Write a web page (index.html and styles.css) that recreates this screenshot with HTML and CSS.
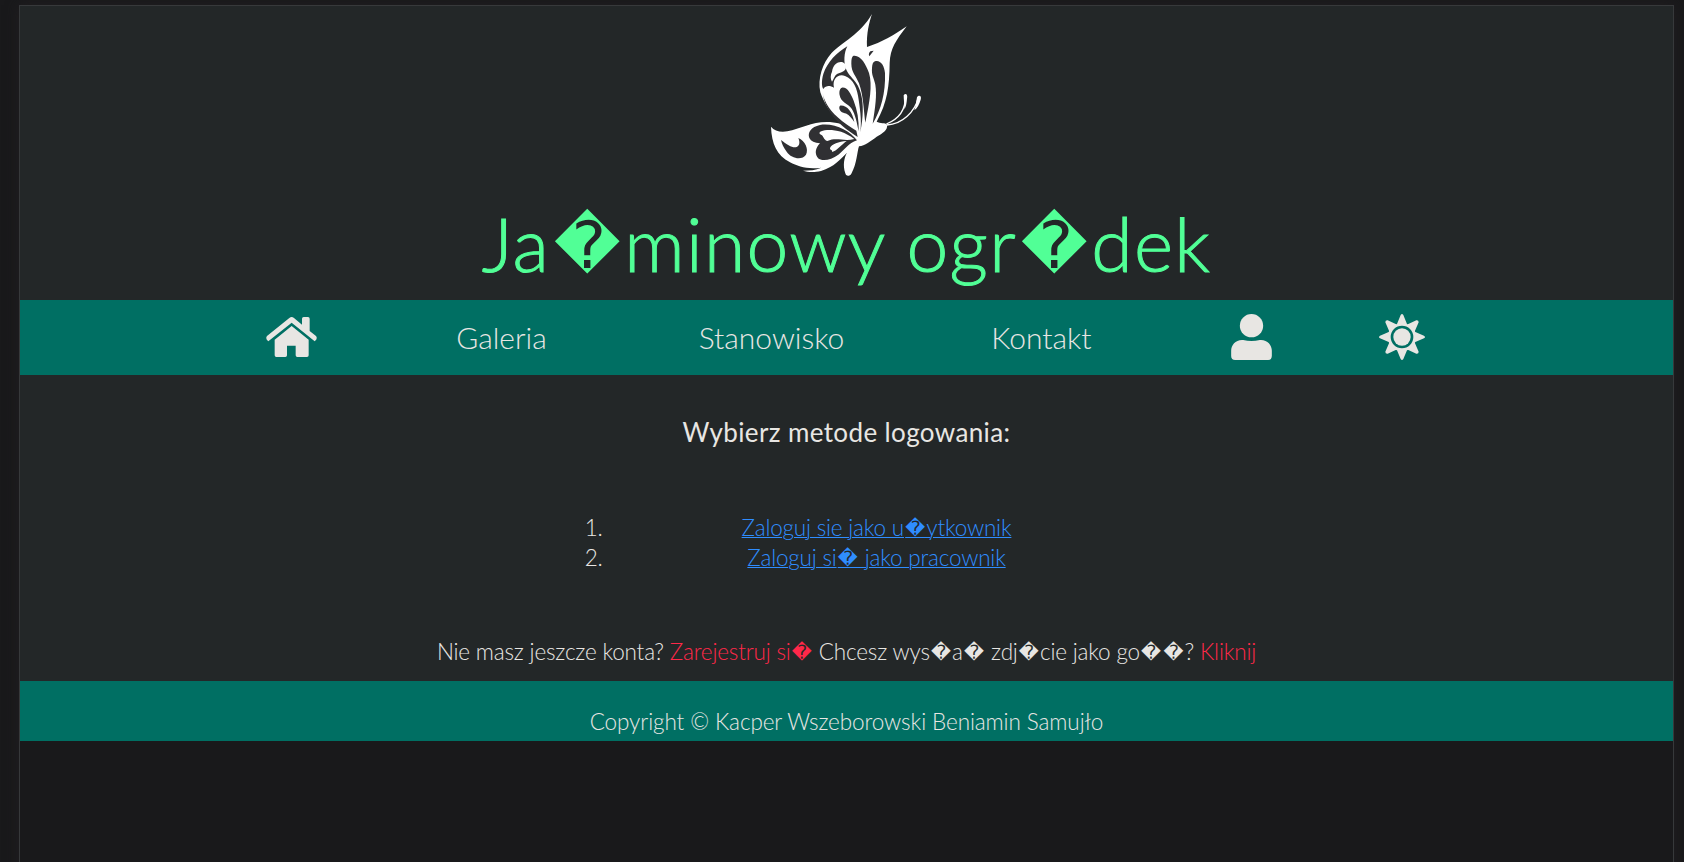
FILE: index.html
```html
<!DOCTYPE html>
<html lang="pl">
<head>
<meta charset="utf-8">
<title>Logowanie</title>
<link rel="stylesheet" href="styles.css">
</head>
<body>
<div class="container">
  <header class="header">
    <svg class="logo" viewBox="0 0 510 525" aria-hidden="true">
      <path class="wing" d="M336 27C328 50 319 85 321 126C365 113 405 88 440 64C407 108 391 130 389 174C388 245 382 292 350 350C360 356 376 352 381 359C384 376 368 384 350 395C332 409 315 421 297 424C291 440 291 477 274 506C269 515 257 514 256 505C248 481 252 459 261 443C241 463 223 485 183 498C160 503 143 501 129 497C150 497 166 495 184 488C142 493 114 485 90 472C50 450 35 417 33 365C43 378 62 383 82 379C132 368 172 339 242 356C210 326 191 291 181 262C172 221 188 174 214 145C246 112 302 87 336 27Z"/>
      <path class="vein" d="M262 124C231 142 202 171 190 207C184 228 185 245 190 252C198 240 211 242 222 248C216 223 234 205 255 213C281 222 292 252 296 284C301 318 307 361 298 394C308 353 311 312 306 281C299 229 270 220 259 194C250 175 252 142 262 124Z"/>
      <path class="wing" d="M216 200C222 164 257 165 258 186C258 202 239 202 231 207C223 212 222 222 216 230C211 222 211 210 216 200Z"/>
      <path class="vein" d="M279 153C300 148 317 176 327 204C338 241 329 291 316 353C311 320 311 274 297 235C288 211 274 203 274 176C274 163 275 157 279 153ZM345 169C360 164 373 180 375 204C377 265 363 315 338 356C346 305 351 270 346 239C342 217 334 212 336 188C337 177 339 171 345 169ZM331 139L341 137L328 154Q324 146 331 139Z"/>
      <path class="vein" d="M246 248C262 246 272 266 281 287C292 315 297 345 296 379C291 354 286 328 275 311C263 295 243 293 239 271C237 260 239 250 246 248ZM240 302C261 300 276 319 283 351C268 329 262 326 250 323C239 319 235 308 240 302Z"/>
      <path class="vein" d="M188 262C192 308 225 354 293 396L289 377C247 353 214 323 200 297C193 284 189 274 188 262Z"/>
      <path class="vein" d="M291 406C270 378 223 353 180 360C153 366 142 383 148 399C153 409 164 414 180 415C166 428 162 449 176 461C191 469 214 464 235 449C254 434 265 415 291 406Z"/>
      <path class="wing" d="M283 402C253 379 226 374 201 375C182 377 172 383 183 389C192 393 189 403 202 408C229 396 252 410 283 402ZM260 408C236 410 215 417 210 429C209 436 219 434 216 441C233 436 243 420 260 408Z"/>
      <path class="vein" d="M63 405C83 421 99 430 110 426C121 421 119 409 115 399C135 408 147 432 138 449C126 467 94 461 80 440C70 427 66 417 63 405Z"/>
      <path class="feeler" d="M379 357C413 343 437 316 436 275M381 360C427 358 465 320 475 278"/>
      <path class="wing" d="M431 271C437 263 444 269 441 281C440 294 438 305 433 313C434 298 431 286 431 271ZM471 277C477 268 486 273 482 284C478 298 472 309 463 316C468 303 468 291 471 277Z"/>
    </svg>
    <h1 class="title">Ja<span class="unknown">&#xFFFD;</span>minowy ogr<span class="unknown">&#xFFFD;</span>dek</h1>
  </header>
  <nav class="nav">
    <a class="item narrow"><svg class="home" viewBox="0 0 153 120"><path d="M7 73 Q-3 65 3 57L70 3Q77-3 84 3L108 23V5Q108 0 113 0H126Q131 0 131 5V42L150 57Q156 65 146 73L77 17Z"/><path d="M26 68L77 27L128 68V115Q128 120 123 120H94Q89 120 89 115V86H63V115Q63 120 58 120H31Q26 120 26 115Z"/></svg></a>
    <a class="item">Galeria</a>
    <a class="item">Stanowisko</a>
    <a class="item">Kontakt</a>
    <a class="item narrow"><svg class="user" viewBox="0 0 122 138"><circle cx="61" cy="35" r="35"/><path d="M36 78Q61 84 86 78C108 76 122 93 122 110V126Q122 138 111 138H12Q0 138 0 126V110C0 93 14 76 36 78Z"/></svg></a>
    <a class="item narrow"><svg class="sun" viewBox="0 0 138 138"><path fill-rule="evenodd" d="M65 3Q69-3 73 3L84 30Q86 31 88 30L112 19Q119 18 119 25L108 50Q107 52 109 54L135 65Q141 69 135 73L109 84Q107 86 108 88L119 113Q119 120 112 119L88 108Q86 107 84 109L73 135Q69 141 65 135L54 109Q52 107 50 108L26 119Q19 120 19 113L30 88Q31 86 29 84L3 73Q-3 69 3 65L29 54Q31 52 30 50L19 25Q19 18 26 19L50 30Q52 31 54 30ZM69 35A34 34 0 1 0 69 103A34 34 0 1 0 69 35Z"/><circle cx="69" cy="69" r="26"/></svg></a>
  </nav>
  <main class="main">
    <h2 class="heading">Wybierz metode logowania:</h2>
    <ol class="methods">
      <li><a class="link">Zaloguj sie jako u<span class="unknown">&#xFFFD;</span>ytkownik</a></li>
      <li><a class="link">Zaloguj si<span class="unknown">&#xFFFD;</span> jako pracownik</a></li>
    </ol>
    <p class="register">Nie masz jeszcze konta? <a class="accent">Zarejestruj si<span class="unknown">&#xFFFD;</span></a> Chcesz wys<span class="unknown">&#xFFFD;</span>a<span class="unknown">&#xFFFD;</span> zdj<span class="unknown">&#xFFFD;</span>cie jako go<span class="unknown">&#xFFFD;&#xFFFD;</span>? <a class="accent">Kliknij</a></p>
  </main>
  <footer class="footer">Copyright © Kacper Wszeborowski Beniamin Samujło</footer>
</div>
</body>
</html>
```
FILE: styles.css
```css
* { box-sizing: border-box; }
body {
  margin: 0;
  height: 862px;
  padding: 5px 10px 0 19px;
  overflow: hidden;
  background: #19191b;
  color: #e8e6e3;
  font: 300 22.5px/30px Lato, "DejaVu Sans", sans-serif;
}
.container {
  height: 900px;
  border: 1px solid #37393b;
  box-shadow: 0 0 12px #211e20;
  background: #19191b;
  text-align: center;
}
.header {
  display: flex;
  flex-direction: column;
  align-items: center;
  height: 294px;
  background: #232728;
}
.logo { display: block; flex: none; width: 170px; height: 175px; margin: -1px 3px 0 0; }
.wing { fill: #fff; }
.vein { fill: #303033; }
.feeler { fill: none; stroke: #fff; stroke-width: 4; }
.unknown {
  font-family: "DejaVu Sans", sans-serif;
  font-size: .865em;
  font-weight: 400;
  line-height: 0;
  letter-spacing: .12em;
  vertical-align: .06em;
  position: relative;
  left: .06em;
  -webkit-text-stroke: 0;
}
.title {
  margin: 18px 0 0;
  color: #51ff96;
  font-size: 75px;
  font-weight: 300;
  line-height: 90px;
  letter-spacing: 1.3px;
  -webkit-text-stroke: 1px #51ff96;
  white-space: nowrap;
}
.nav {
  display: flex;
  justify-content: center;
  height: 75px;
  padding-bottom: 2px;
  background: #006f63;
  font-size: 30px;
}
.item { width: 270px; display: flex; align-items: center; justify-content: center; }
.narrow { width: 150px; }
.nav svg { display: block; fill: #e8e6e3; }
.home { width: 51px; height: 40px; }
.user { width: 41px; height: 46px; }
.sun { width: 46px; height: 46px; }
.main {
  height: 306px;
  padding-top: 42px;
  background: #232728;
}
.heading { margin: 0; font-size: 26px; font-weight: 400; line-height: 30px; letter-spacing: .38px; }
.methods { width: 600px; margin: 66px auto 0; padding: 0 2px 0 62px; letter-spacing: -.2px; }
.link { color: #2f8dff; text-decoration: underline; text-decoration-thickness: 1px; }
.register { margin: 64px 0 0; white-space: nowrap; letter-spacing: -.18px; }
.accent { color: #ff2849; }
.footer { height: 60px; padding-top: 26px; background: #006f63; letter-spacing: -.1px; }
```
